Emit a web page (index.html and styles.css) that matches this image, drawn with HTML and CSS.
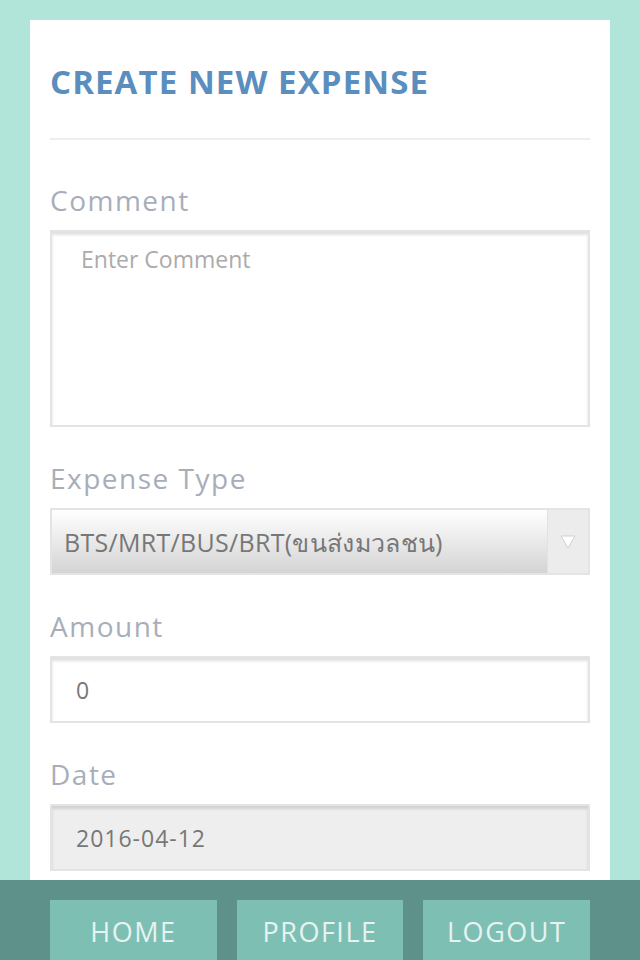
FILE: index.html
```html
<!DOCTYPE html>
<html>
<head>
<meta charset="utf-8">
<link rel="stylesheet" href="styles.css">
</head>
<body>
<div class="card">
  <h1 class="title">CREATE NEW EXPENSE</h1>
  <hr class="divider">

  <div class="field first">
    <label for="comment">Comment</label>
    <textarea id="comment" class="box comment" placeholder="Enter Comment"></textarea>
  </div>

  <div class="field">
    <label for="type">Expense Type</label>
    <div class="select-wrap">
      <select id="type" class="select">
        <option>BTS/MRT/BUS/BRT(ขนส่งมวลชน)</option>
      </select>
      <span class="arrow">
        <svg width="16" height="14" viewBox="0 0 16 14"><path d="M1 1 L8 13 L15 1 Z" fill="#ffffff" stroke="#d0d0d0" stroke-width="1"/></svg>
      </span>
    </div>
  </div>

  <div class="field">
    <label for="amount">Amount</label>
    <input type="text" id="amount" class="box" value="0">
  </div>

  <div class="field">
    <label for="date">Date</label>
    <input type="text" id="date" class="box date" value="2016-04-12" readonly>
  </div>
</div>

<div class="nav">
  <a class="nav-btn" href="#">HOME</a>
  <a class="nav-btn" href="#">PROFILE</a>
  <a class="nav-btn" href="#">LOGOUT</a>
</div>
</body>
</html>
```

FILE: styles.css
```css
html,
body {
  margin: 0;
  padding: 0;
  height: 100%;
}
body {
  background-color: #b1e5d9;
  font-family: 'Open Sans', 'Noto Sans', sans-serif;
  overflow: hidden;
}
.card {
  background-color: #fff;
  margin: 20px 30px 0 30px;
  padding: 0 20px;
  min-height: 940px;
  box-sizing: border-box;
  overflow: hidden;
}
.title {
  margin: 0;
  padding-top: 42px;
  font-size: 33px;
  line-height: 40px;
  font-weight: 700;
  letter-spacing: 1.1px;
  color: #5a8ebf;
}
.divider {
  border: none;
  border-top: 2px solid #eeeeee;
  margin: 36px 0 0 0;
}
.field {
  margin-top: 33px;
}
.field.first {
  margin-top: 42px;
}
label {
  display: block;
  font-size: 28px;
  line-height: 36px;
  letter-spacing: 1.5px;
  color: #a8aeb9;
  margin-bottom: 12px;
}
.box {
  display: block;
  width: 100%;
  box-sizing: border-box;
  border: 2px solid #e4e4e4;
  box-shadow: inset 0 3px 3px rgba(0, 0, 0, 0.12);
  border-radius: 0;
  font-family: 'Open Sans', 'Noto Sans', sans-serif;
  font-size: 23px;
  letter-spacing: 1px;
  color: #777777;
  padding: 0 24px;
  height: 67px;
  outline: none;
  background-color: #fff;
}
.comment {
  height: 197px;
  padding: 11px 29px;
  letter-spacing: 0;
  resize: none;
}
.comment::placeholder {
  color: #ababab;
}
.date {
  background-color: #eeeeee;
}
.select-wrap {
  display: flex;
  height: 67px;
  border: 2px solid #e4e4e4;
  box-sizing: border-box;
}
.select {
  flex: 1;
  appearance: none;
  -webkit-appearance: none;
  border: none;
  border-radius: 0;
  margin: 0;
  padding: 0 12px;
  font-family: 'Open Sans', 'Noto Sans', sans-serif;
  font-size: 25px;
  letter-spacing: 0.3px;
  color: #777777;
  background: linear-gradient(to bottom, #ffffff, #d4d4d4);
  outline: none;
}
.arrow {
  width: 40px;
  display: flex;
  align-items: center;
  justify-content: center;
  background-color: #ececec;
  border-left: 1px solid #e2e2e2;
}
.nav {
  position: fixed;
  left: 0;
  right: 0;
  bottom: 0;
  height: 80px;
  background-color: #5e9189;
  display: flex;
  gap: 20px;
  padding: 20px 50px 0 50px;
  box-sizing: border-box;
}
.nav-btn {
  flex: 1;
  background-color: #7ebfb4;
  color: #e6f3f0;
  text-decoration: none;
  font-size: 27px;
  letter-spacing: 1.5px;
  text-align: center;
  line-height: 64px;
}
```
